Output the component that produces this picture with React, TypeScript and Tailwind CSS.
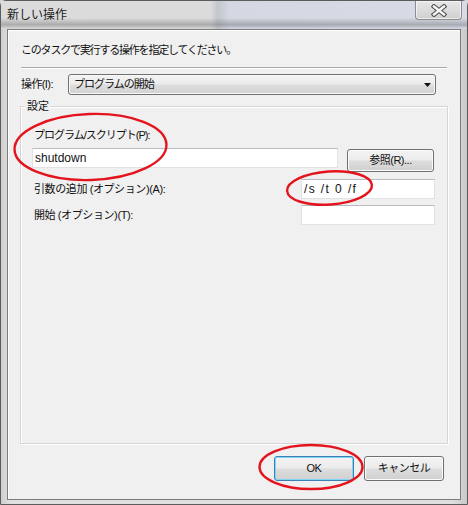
import React from 'react'

const jp = { fontFamily: '"Liberation Sans", "Noto Sans CJK JP", sans-serif' }

function WinButton({ label, primary = false, className = '' }: { label: string; primary?: boolean; className?: string }) {
  return (
    <div
      className={
        'flex items-center justify-center rounded-[3px] border text-[11px] tracking-[-0.5px] text-[#111] ' +
        (primary
          ? 'border-[#3c7fb1] shadow-[inset_0_0_0_1px_#7fd6f5] '
          : 'border-[#707070] shadow-[inset_0_0_0_1px_#fbfbfb] ') +
        'bg-[linear-gradient(180deg,#f3f3f3_0%,#ececec_48%,#dddddd_52%,#d0d0d0_100%)] ' +
        className
      }
    >
      {label}
    </div>
  )
}

function TextBox({ value = '', className = '' }: { value?: string; className?: string }) {
  return (
    <div
      className={
        'flex h-[20px] items-center border border-[#dfe2e7] border-t-[#b8bbc1] bg-white px-[2px] text-[12px] text-[#111] ' +
        className
      }
    >
      {value}
    </div>
  )
}

function Marks() {
  return (
    <svg className="pointer-events-none absolute inset-0" width="468" height="505" viewBox="0 0 468 505">
      <g fill="none" stroke="#e4141e" strokeWidth="2.4">
        <ellipse cx="90.5" cy="147" rx="76" ry="33" transform="rotate(-2 90.5 147)" />
        <ellipse cx="329.5" cy="188" rx="42.5" ry="16.5" transform="rotate(-4 329.5 188)" />
        <ellipse cx="311" cy="467" rx="51.5" ry="22" />
      </g>
    </svg>
  )
}

export default function App() {
  return (
    <div className="relative h-[505px] w-[468px] overflow-hidden bg-[#d6d7da]" style={jp}>
      <div className="flex h-full flex-col rounded-t-[6px] border border-[#5c5c5c] bg-[linear-gradient(90deg,#cfcfcf_0%,#e0e0e0_2%,#dedede_97%,#c8c8c8_100%)]">
        {/* title bar */}
        <div className="flex h-[28px] shrink-0 justify-between bg-[linear-gradient(180deg,rgba(0,0,0,0)_60%,rgba(80,80,80,0.35)_85%,rgba(0,0,0,0)_100%),linear-gradient(90deg,#dcdcdc_0%,#dbdbdb_45%,#c3c6cc_46.5%,#d3d8e3_49%,#d6dbe6_100%)]">
          <div className="pl-[6px] pt-[7px] text-[12px] leading-[14px] text-[#1b1b1b]">新しい操作</div>
          <div className="mr-[5px] flex h-[19px] w-[47px] items-center justify-center rounded-b-[4px] border border-t-0 border-[#8c8c8c] bg-[linear-gradient(180deg,#e6e6e6_0%,#dcdcdc_50%,#cfcfcf_100%)] shadow-[inset_0_0_0_1px_rgba(255,255,255,0.6)]">
            <svg width="16" height="13" viewBox="0 0 16 13">
              <path d="M3 2.5 L13 10.5 M13 2.5 L3 10.5" stroke="#505050" strokeWidth="4.6" strokeLinecap="square" />
              <path d="M3 2.5 L13 10.5 M13 2.5 L3 10.5" stroke="#f6f6f6" strokeWidth="2.4" strokeLinecap="square" />
            </svg>
          </div>
        </div>

        {/* client area */}
        <div className="mx-[6px] mb-[4px] flex flex-1 flex-col border border-[#7c7c7c] bg-[#f0f0f0] shadow-[inset_1px_1px_0_#ffffff]">
          <p className="ml-[13px] mt-[13px] text-[11px] leading-[14px] tracking-[-1.2px] text-[#111]">
            このタスクで実行する操作を指定してください。
          </p>
          <div className="mx-[13px] mt-[10px] h-[2px] border-t border-[#a9a9a9] border-b-white" style={{ borderBottomWidth: 1 }} />

          <div className="mt-[5px] flex h-[21px] items-center">
            <div className="ml-[13px] w-[47px] text-[11px] tracking-[-0.6px] text-[#111]">操作(I):</div>
            <div className="flex h-[21px] w-[368px] items-center justify-between rounded-[3px] border border-[#707070] bg-[linear-gradient(180deg,#f3f3f3_0%,#ececec_48%,#dddddd_52%,#d3d3d3_100%)] pl-[5px] pr-[4px] shadow-[inset_0_0_0_1px_#f8f8f8]">
              <span className="text-[11px] tracking-[-1px] text-[#111]">プログラムの開始</span>
              <svg width="7" height="4" viewBox="0 0 7 4">
                <path d="M0 0 H7 L3.5 4 Z" fill="#111" />
              </svg>
            </div>
          </div>

          {/* group box */}
          <div className="relative ml-[12px] mt-[11px] h-[338px] w-[428px] border border-[#d5d5d5] shadow-[inset_1px_1px_0_#ffffff,1px_1px_0_#ffffff]">
            <div className="absolute left-[4px] top-[-8px] bg-[#f0f0f0] px-[2px] text-[11px] leading-[14px] text-[#111]">設定</div>

            <div className="ml-[13px] mt-[21px] text-[11px] leading-[14px] tracking-[-1px] text-[#111]">プログラム/スクリプト(P):</div>
            <div className="ml-[11px] mt-[6px] flex items-start gap-[9px]">
              <TextBox value="shutdown" className="w-[306px]" />
              <WinButton label="参照(R)..." className="mt-[1px] h-[23px] w-[87px]" />
            </div>

            <div className="mt-[7px] flex h-[20px] items-center justify-between pr-[12px]">
              <div className="ml-[13px] text-[11px] tracking-[-0.4px] text-[#111]">引数の追加 (オプション)(A):</div>
              <TextBox value="/s /t 0 /f" className="w-[134px] tracking-[1.4px]" />
            </div>

            <div className="mt-[6px] flex h-[20px] items-center justify-between pr-[12px]">
              <div className="ml-[13px] text-[11px] tracking-[-0.4px] text-[#111]">開始 (オプション)(T):</div>
              <TextBox className="w-[134px]" />
            </div>
          </div>

          <div className="mr-[16px] mt-[12px] flex justify-end gap-[10px]">
            <WinButton label="OK" primary className="h-[25px] w-[80px]" />
            <WinButton label="キャンセル" className="h-[25px] w-[80px]" />
          </div>
        </div>
      </div>
      <Marks />
    </div>
  )
}
